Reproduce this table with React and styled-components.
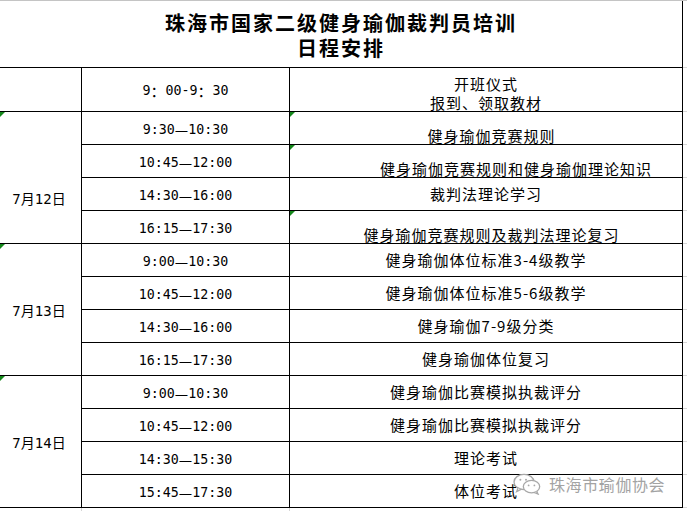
import React from 'react';
import styled, { createGlobalStyle, css } from 'styled-components';

const GlobalStyle = createGlobalStyle`
  html, body {
    margin: 0;
    padding: 0;
    background: #ffffff;
  }
  body {
    font-family: "Noto Sans CJK SC", "Noto Sans", sans-serif;
    color: #000;
  }
`;

const Page = styled.div`
  position: relative;
  width: 687px;
  height: 511px;
  overflow: hidden;
  border-top: 1px solid #c4c4c4;
  box-sizing: border-box;
  background: #fff;
`;

const Sheet = styled.div`
  display: grid;
  grid-template-columns: 82px 208px 393px 1fr;
  grid-template-rows: 67px 44px repeat(12, 33px) 1fr;
  height: 100%;
`;

const flagged = css`
  &::before {
    content: '';
    position: absolute;
    top: 0;
    left: 0;
    border-top: 5px solid #14871a;
    border-right: 5px solid transparent;
  }
`;

const Cell = styled.div`
  position: relative;
  box-sizing: border-box;
  display: flex;
  justify-content: center;
  border-bottom: 1px solid #000;
  border-right: 1px solid #000;
  overflow: hidden;
  ${p => p.$flag && flagged}
`;

const TitleCell = styled(Cell)`
  grid-column: 1 / 4;
  flex-direction: column;
  align-items: center;
  justify-content: center;
  font-size: 20px;
  font-weight: bold;
  letter-spacing: 2px;
  line-height: 25px;
  padding-top: 1px;
`;

const DateCell = styled(Cell)`
  grid-column: 1;
  grid-row: span ${p => p.$span || 1};
  align-items: center;
  padding-top: ${p => p.$drop || 0}px;
  padding-right: 3px;
  font-family: "DejaVu Sans Mono", "Noto Sans CJK SC", monospace;
  font-size: 14px;
`;

const TimeCell = styled(Cell)`
  grid-column: 2;
  align-items: center;
  padding-top: 2px;
  font-family: "DejaVu Sans Mono", "Noto Sans CJK SC", monospace;
  font-size: 13.3px;
  white-space: pre;
`;

const Wide = styled.span`
  font-family: "Noto Sans CJK SC", sans-serif;
  font-size: 15px;
`;

const ActivityCell = styled(Cell)`
  grid-column: 3;
  flex-direction: column;
  align-items: center;
  justify-content: ${p => (p.$bottom ? 'flex-end' : 'center')};
  padding-left: ${p => p.$indent || 0}px;
  font-size: 15px;
  letter-spacing: 1px;
  line-height: ${p => p.$lead || 16}px;
  white-space: nowrap;
`;

const ActivityLine = styled.span`
  display: block;
  margin-bottom: ${p => p.$sink || 0}px;
`;

const Gutter = styled.div`
  grid-column: 4;
  border-bottom: 1px solid #d6d6d6;
`;

const FootCell = styled.div`
  border-right: 1px solid ${p => (p.$line ? '#d6d6d6' : 'transparent')};
`;

const Watermark = styled.div`
  position: absolute;
  left: 513px;
  top: 471px;
  display: flex;
  align-items: center;
  gap: 8px;
  color: #a3a3a3;
  font-size: 16px;
  letter-spacing: 0.6px;
  text-shadow: 0 0 2px #fff, 0 0 2px #fff, 0 0 3px #fff;
`;

const WeChatIcon = () => (
  <svg width="28" height="22" viewBox="0 0 28 22" fill="none" stroke="#a8a8a8" strokeWidth="1.3">
    <ellipse cx="11" cy="9" rx="10" ry="7.6" fill="#fff" />
    <path d="M5 15.2 L3.6 18.6 L8 16.4" fill="#fff" />
    <ellipse cx="18.5" cy="13.6" rx="8.2" ry="6.3" fill="#fff" />
    <path d="M23.6 18.4 L25 21 L21 19.4" fill="#fff" />
    <circle cx="7.4" cy="6.8" r="1" fill="#a8a8a8" stroke="none" />
    <circle cx="13" cy="6.8" r="1" fill="#a8a8a8" stroke="none" />
    <circle cx="15.6" cy="12.4" r="0.9" fill="#a8a8a8" stroke="none" />
    <circle cx="21.4" cy="12.4" r="0.9" fill="#a8a8a8" stroke="none" />
  </svg>
);

const Dash = () => <Wide>—</Wide>;

const days = [
  {
    date: '7月12日',
    drop: 40,
    flag: true,
    rows: [
      { from: '9:30', to: '10:30', text: '健身瑜伽竞赛规则', bottom: true, indent: 11, flag: true },
      { from: '10:45', to: '12:00', text: '健身瑜伽竞赛规则和健身瑜伽理论知识', bottom: true, indent: 60, flag: true },
      { from: '14:30', to: '16:00', text: '裁判法理论学习' },
      { from: '16:15', to: '17:30', text: '健身瑜伽竞赛规则及裁判法理论复习', bottom: true, indent: 11, flag: true },
    ],
  },
  {
    date: '7月13日',
    flag: true,
    rows: [
      { from: '9:00', to: '10:30', text: '健身瑜伽体位标准3-4级教学' },
      { from: '10:45', to: '12:00', text: '健身瑜伽体位标准5-6级教学' },
      { from: '14:30', to: '16:00', text: '健身瑜伽7-9级分类' },
      { from: '16:15', to: '17:30', text: '健身瑜伽体位复习' },
    ],
  },
  {
    date: '7月14日',
    flag: true,
    rows: [
      { from: '9:00', to: '10:30', text: '健身瑜伽比赛模拟执裁评分' },
      { from: '10:45', to: '12:00', text: '健身瑜伽比赛模拟执裁评分' },
      { from: '14:30', to: '15:30', text: '理论考试' },
      { from: '15:45', to: '17:30', text: '体位考试' },
    ],
  },
];

const App = () => (
  <>
    <GlobalStyle />
    <Page>
      <Sheet>
        <TitleCell>
          <span>珠海市国家二级健身瑜伽裁判员培训</span>
          <span>日程安排</span>
        </TitleCell>
        <Gutter />

        <DateCell />
        <TimeCell>
          9<Wide>：</Wide>00-9<Wide>：</Wide>30
        </TimeCell>
        <ActivityCell $bottom $lead={19}>
          <ActivityLine>开班仪式</ActivityLine>
          <ActivityLine $sink={-1}>报到、领取教材</ActivityLine>
        </ActivityCell>
        <Gutter />

        {days.map(day => (
          <React.Fragment key={day.date}>
            <DateCell $span={day.rows.length} $drop={day.drop} $flag={day.flag}>
              {day.date}
            </DateCell>
            {day.rows.map((row, i) => (
              <React.Fragment key={i}>
                <TimeCell>
                  {row.from}
                  <Dash />
                  {row.to}
                </TimeCell>
                <ActivityCell $bottom={row.bottom} $indent={row.indent} $flag={row.flag}>
                  <ActivityLine>{row.text}</ActivityLine>
                </ActivityCell>
                <Gutter />
              </React.Fragment>
            ))}
          </React.Fragment>
        ))}

        <FootCell $line />
        <FootCell $line />
        <FootCell />
        <FootCell />
      </Sheet>

      <Watermark>
        <WeChatIcon />
        <span>珠海市瑜伽协会</span>
      </Watermark>
    </Page>
  </>
);

export default App;
